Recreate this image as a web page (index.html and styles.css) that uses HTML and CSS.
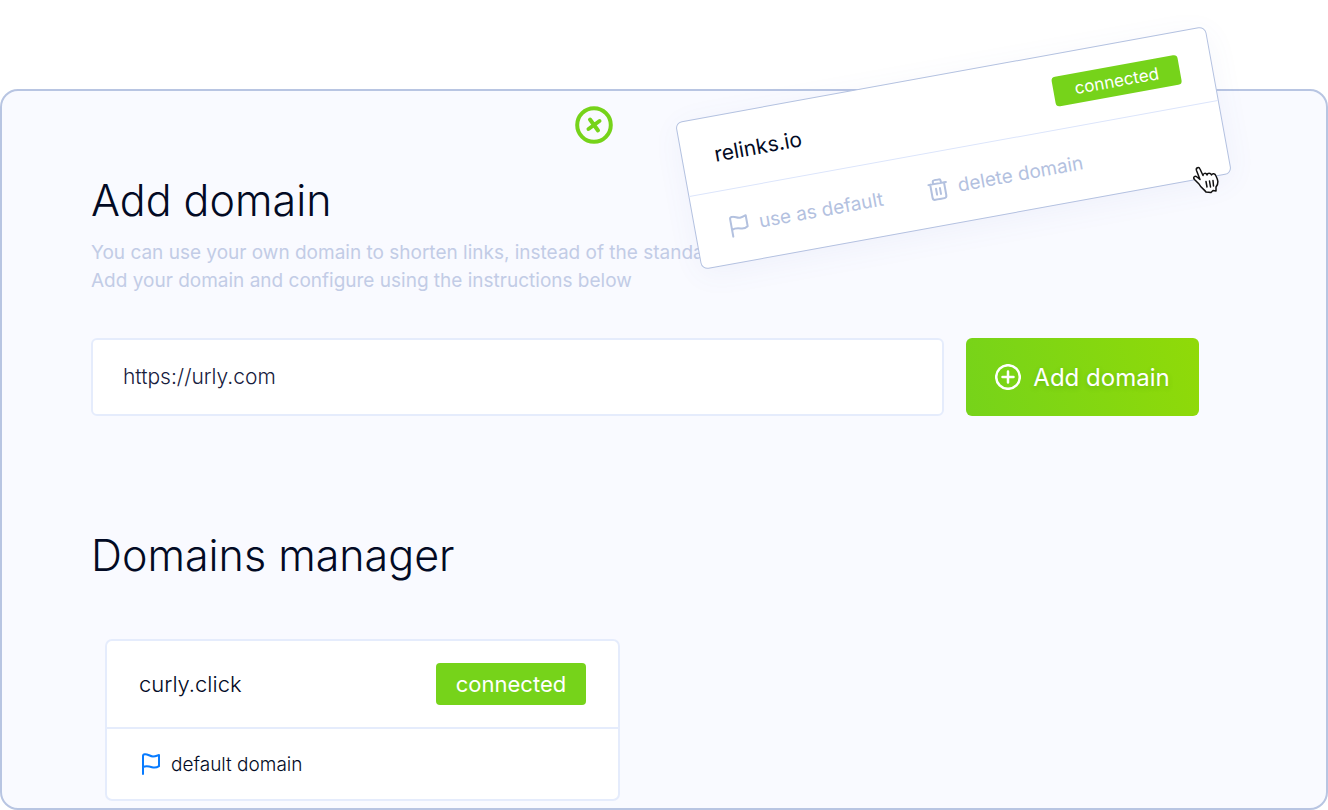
FILE: index.html
```html
<!DOCTYPE html>
<html lang="en">
<head>
    <meta charset="UTF-8">
    <meta name="viewport" content="width=device-width, initial-scale=1.0">
    <title>Domains</title>
    <link rel="stylesheet" href="styles.css">
</head>
<body>

<!-- Shared icons -->
<svg class="sprite" aria-hidden="true">
    <symbol id="icon-flag" viewBox="0 0 20 22">
        <path d="M2 21V3C2 1.800 2.700 1.300 3.800 1.200C7 .9 8.800 3.400 12 3.400C14.500 3.400 16 2.600 18 2V13.200C15.500 14.800 13.500 15 11 14.200C8 13.200 5 12.600 2 14"/>
    </symbol>
    <symbol id="icon-trash" viewBox="0 0 20 22">
        <path d="M1 5H19M6 5V3Q6 1.200 8 1.200H12Q14 1.200 14 3V5M3 5V18Q3 20.800 5.500 20.800H14.500Q17 20.800 17 18V5M8 10V16M12 10V16"/>
    </symbol>
</svg>

<main class="panel">
    <svg class="mark" viewBox="0 0 38 38" aria-hidden="true">
        <circle cx="19" cy="19" r="16.800"/>
        <path d="M15 13.500L23 24.500M13.500 23L24.500 15"/>
    </svg>

    <!-- Add domain -->
    <section class="add">
        <h1>Add domain</h1>
        <p>You can use your own domain to shorten links, instead of the standard<br>Add your domain and configure using the instructions below</p>
        <form class="add-form">
            <input type="text" value="https://urly.com" aria-label="Domain address">
            <button type="button">
                <svg class="plus" viewBox="0 0 26 26" aria-hidden="true">
                    <circle cx="13" cy="13" r="11.800"/>
                    <path d="M13 7.500V18.500M7.500 13H18.500"/>
                </svg>
                Add domain
            </button>
        </form>
    </section>

    <!-- Domains manager -->
    <section class="manager">
        <h2>Domains manager</h2>
        <article class="card">
            <div class="card-top">
                <span>curly.click</span>
                <span class="badge">connected</span>
            </div>
            <div class="card-bottom">
                <span class="state"><svg class="icon"><use href="#icon-flag"/></svg>default domain</span>
            </div>
        </article>
    </section>
</main>

<!-- Card being dragged -->
<article class="card card-drag">
    <div class="card-top">
        <span>relinks.io</span>
        <span class="badge">connected</span>
    </div>
    <div class="card-bottom">
        <button class="action" type="button"><svg class="icon"><use href="#icon-flag"/></svg>use as default</button>
        <button class="action" type="button"><svg class="icon"><use href="#icon-trash"/></svg>delete domain</button>
    </div>
</article>
<svg class="cursor" viewBox="0 0 28 28" aria-hidden="true">
    <path d="M7 18L2.500 13.500C.5 11 3 9.500 5 11L8 13.500L4.500 4.500C3.500 1.500 7 .5 8 3L11 9.500C11 7 14 6.500 15 9C15.500 6.500 18.500 6.500 19.500 9C20.500 7 23 7.500 24 10C26 14 27 17 24 21V25L21 24.500L19 26.500L14 26C12 23 9 22 7 18Z"/>
    <path d="M14 15.500L15 21M17.500 15L18.500 21M21 14.500L21.500 20"/>
</svg>

</body>
</html>
```

FILE: styles.css
```css
* {
    box-sizing: border-box;
}
body {
    margin: 0;
    padding-top: 89px;
    position: relative;
    background-color: #fff;
    color: #020a24;
    font-family: Inter, "Open Sans", sans-serif;
}
h1, h2 {
    margin: 0;
    font-size: 43px;
    line-height: 56px;
    font-weight: 300;
}
svg {
    fill: none;
    stroke: currentColor;
    stroke-width: 2;
    stroke-linecap: round;
    stroke-linejoin: round;
    flex-shrink: 0;
}
.sprite {
    position: absolute;
    width: 0;
    height: 0;
}
.panel {
    min-height: calc(100vh - 89px);
    padding: 15px 127px 7px 89px;
    border: 2px solid #b8c5e2;
    border-radius: 18px;
    background-color: #f9faff;
}
.mark {
    display: block;
    width: 38px;
    height: 38px;
    margin-left: 43.7%;
    color: #76d31a;
    stroke-width: 4;
}
.add {
    padding-top: 28px;
}
.add p {
    margin: 11px 0 43px;
    color: #c2cce6;
    font-size: 19px;
    line-height: 28px;
    white-space: nowrap;
}
.add-form {
    display: flex;
    gap: 22px;
}
.add-form input {
    flex: 1;
    min-width: 0;
    height: 78px;
    padding: 0 30px 2px;
    border: 2px solid #e5ecfc;
    border-radius: 6px;
    background-color: #fff;
    color: #17203d;
    font: 300 21px Inter, sans-serif;
}
.add-form button {
    display: flex;
    align-items: center;
    justify-content: center;
    gap: 12px;
    width: 233px;
    border: none;
    border-radius: 6px;
    background: linear-gradient(75deg, #76d31a, #90da08);
    color: #fff;
    font: 400 24px Inter, sans-serif;
    text-shadow: 0 2px 5px rgba(60, 130, 0, 0.3);
    white-space: nowrap;
    cursor: pointer;
}
.plus {
    width: 26px;
    height: 26px;
    stroke-width: 2.5;
}
.manager {
    padding-top: 111px;
}
.card {
    width: 515px;
    border: 2px solid #e5ecfc;
    border-radius: 7px;
    background-color: #fff;
}
.manager .card {
    margin: 56px 0 0 14px;
}
.card-top {
    display: flex;
    align-items: center;
    justify-content: space-between;
    height: 88px;
    padding: 0 32px;
    border-bottom: 2px solid #e5ecfc;
    font-size: 22px;
    font-weight: 300;
}
.card-bottom {
    display: flex;
    align-items: center;
    height: 70px;
    padding: 0 34px;
    font-size: 19px;
    font-weight: 300;
}
.badge {
    display: flex;
    align-items: center;
    justify-content: center;
    width: 150px;
    height: 42px;
    border-radius: 4px;
    background-color: #76d31a;
    color: #fff;
    font-weight: 400;
}
.state, .action {
    display: flex;
    align-items: center;
    gap: 10px;
}
.icon {
    width: 20px;
    height: 22px;
}
.state .icon {
    color: #087bff;
}
.card-drag {
    position: absolute;
    top: 73px;
    left: 684px;
    width: 539px;
    border: 1px solid #b3c1e0;
    box-shadow: 0 6px 30px rgba(90, 110, 190, 0.06);
    transform: rotate(-10.3deg);
}
.card-drag .card-top {
    height: 75px;
    padding: 0 32px;
    border-bottom-width: 1px;
    border-color: #dce5fb;
    font-size: 21px;
    font-weight: 400;
}
.card-drag .card-bottom {
    height: 73px;
    gap: 46px;
}
.card-drag .badge {
    width: 128px;
    height: 30px;
    font-size: 17px;
}
.action {
    padding: 0;
    border: none;
    background: none;
    color: #b3c1df;
    font: 400 19px Inter, sans-serif;
    white-space: nowrap;
    cursor: pointer;
}
.cursor {
    position: absolute;
    top: 166px;
    left: 1192px;
    width: 28px;
    height: 28px;
    fill: #fff;
    stroke: #111;
    stroke-width: 1.5;
}
```
